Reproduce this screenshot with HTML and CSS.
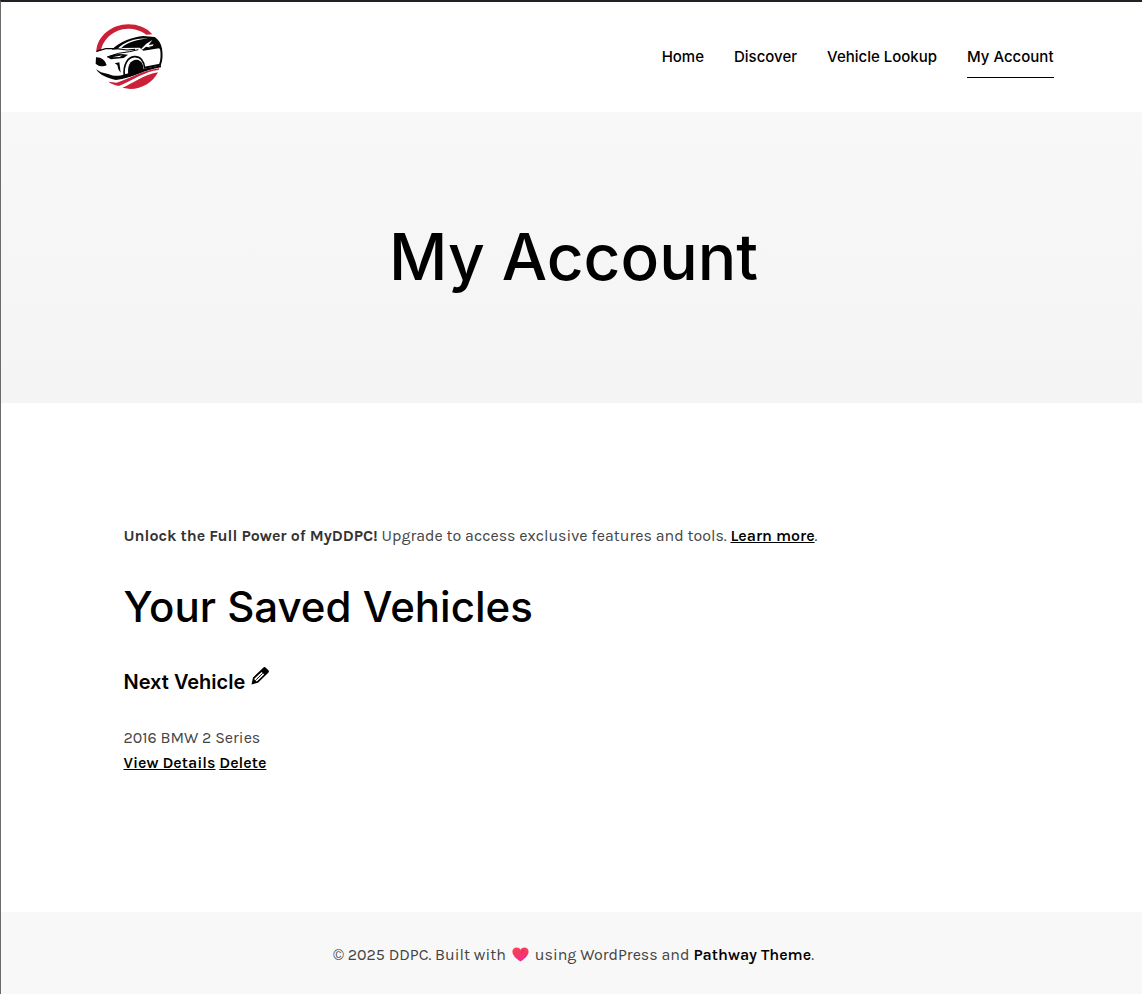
FILE: index.html
```html
<!DOCTYPE html>
<html lang="en">
<head>
<meta charset="utf-8">
<title>My Account</title>
<link rel="stylesheet" href="styles.css">
</head>
<body>
<header class="header">
  <a class="logo"><svg viewBox="30 24 207 201" width="69" height="67">
    <path d="M34 110C36 62 82 28 130 28C158 28 185 38 202 58L184 59C168 46 148 41 128 41C90 42 55 69 48 106Z" fill="#cc1f38"/>
    <path d="M80 104C102 82 142 65 175 63L209 66C221 74 229 87 231 101L228 106L222 100L175 107L164 98L109 99C128 80 160 74 190 70C150 69 120 79 96 103Z" fill="#050505"/>
    <path d="M166 104L184 86L202 75L191 90L206 88L203 93L192 95L196 98Z" fill="#fff"/>
    <path d="M174 103L183 95L199 98L194 103Z" fill="#050505"/>
    <path d="M34 109L62 101L95 101L126 105L150 103" fill="none" stroke="#050505" stroke-width="3.5"/>
    <path d="M66 126L100 115L134 110L160 104" fill="none" stroke="#050505" stroke-width="3"/>
    <path d="M33 127C47 126 60 134 65 151C54 157 39 153 32 146Z" fill="#050505"/>
    <path d="M67 126C84 116 104 115 129 119L116 129L77 133Z" fill="#050505"/>
    <path d="M82 127L112 121L104 126Z" fill="#fff"/>
    <path d="M89 145L103 142L107 173L100 163L97 150Z" fill="#050505"/>
    <path d="M118 182C114 149 128 127 148 125C166 124 177 138 179 160" fill="none" stroke="#050505" stroke-width="5"/>
    <path d="M131 186C124 153 136 134 155 134C170 135 178 151 174 170Z" fill="#050505"/>
    <path d="M178 158L225 149C230 136 231 119 228 100" fill="none" stroke="#050505" stroke-width="6"/>
    <path d="M33 163L48 172L72 178C87 184 100 184 120 178L176 161L228 151V157C178 164 143 190 93 195C67 190 44 180 33 163Z" fill="#050505"/>
    <path d="M70 200L95 203C133 192 174 165 223 160L221 165C178 169 145 196 101 213C88 210 78 206 70 200Z" fill="#cc1f38"/>
    <path d="M112 218C145 206 171 180 219 172C203 203 171 222 136 222Z" fill="#cc1f38"/>
  </svg></a>
  <nav class="nav">
    <a class="nav-link">Home</a>
    <a class="nav-link">Discover</a>
    <a class="nav-link">Vehicle Lookup</a>
    <a class="nav-link active">My Account</a>
  </nav>
</header>
<section class="hero"><h1 class="hero-title">My Account</h1></section>
<main class="content">
  <p class="notice"><strong class="notice-lead">Unlock the Full Power of MyDDPC!</strong> Upgrade to access exclusive features and tools. <a class="link">Learn more</a>.</p>
  <h2 class="section-title">Your Saved Vehicles</h2>
  <h3 class="vehicle-name"><span>Next Vehicle</span>
    <svg class="pencil" viewBox="0 0 18 18" width="18" height="18">
      <path d="M0.5 17.5L2 10.5L12.2.8C13-.1 14-.1 14.8.7L17.4 3.3C18.1 4.1 18.1 4.9 17.3 5.7L7 15.8Z"/>
      <path class="pencil-cut" d="M3.5 11.6L10.6 4.9L13.1 7.4L6.1 14.2L4.9 14.2L4.7 12.9L3.4 12.7Z"/>
      <path class="pencil-line" d="M5.2 12.7L11.7 6.3"/>
    </svg>
  </h3>
  <div class="vehicle-model">2016 BMW 2 Series</div>
  <div class="actions"><a class="link">View Details</a> <a class="link">Delete</a></div>
</main>
<footer class="footer">
  <span class="copy">© 2025 DDPC. Built with</span>
  <svg class="heart" viewBox="0 0 17 15" width="17" height="15">
    <defs><linearGradient id="heart-fill" x1="0" y1="0" x2=".35" y2="1"><stop offset="0" stop-color="#f8455c"/><stop offset=".5" stop-color="#f43a5e"/><stop offset="1" stop-color="#fb2796"/></linearGradient></defs>
    <path d="M8.5 14.6C6 13 .4 9 .4 4.8C.4 2.2 2.1.5 4.5.5C6.3.5 7.7 1.4 8.5 2.7C9.3 1.4 10.7.5 12.5.5C14.9.5 16.6 2.2 16.6 4.8C16.6 9 11 13 8.5 14.6Z" fill="url(#heart-fill)"/>
    <path d="M11 2.2C12.2 2.9 11 5 9 6.5" fill="none" stroke="#c9304d" stroke-width=".9"/>
  </svg>
  <span class="using">using WordPress and</span>
  <span><a class="theme">Pathway Theme</a>.</span>
</footer>
</body>
</html>
```
FILE: styles.css
```css
* { box-sizing: border-box; }
body {
  margin: 0; height: 994px; display: flex; flex-direction: column;
  border-top: 2px solid #202126; border-left: 1px solid #6b6b6b;
  background: #fff; color: #444;
  font: 400 16px/25px Karla, Roboto, sans-serif;
}
h1, h2, h3, p { margin: 0; }
.header {
  height: 110px; flex: none; display: flex; justify-content: space-between; align-items: flex-start;
  padding: 21px 88.5px 0 94px;
}
.logo svg { display: block; }
.nav { display: flex; gap: 30px; padding-top: 14px; }
.nav-link {
  font: 500 15px/40px Inter, sans-serif; color: #000;
  border-bottom: 1px solid transparent; white-space: nowrap;
}
.active { border-color: #000; }
.hero {
  height: 291px; flex: none; display: flex; justify-content: center; align-items: center;
  background: linear-gradient(#f8f8f8, #f4f4f4); padding: 0 0 2px 4px;
}
.hero-title { font: 500 64px/80px Inter, sans-serif; color: #000; }
.content { height: 509px; flex: none; padding: 120px 123px 0 122.5px; }
.notice { white-space: nowrap; }
.notice-lead { font-weight: 700; color: #333; }
.link, .theme { color: #000; font-weight: 600; }
.link { text-decoration: underline; text-underline-offset: 1px; text-decoration-thickness: 1px; }
.section-title { font: 500 42px/54px Inter, sans-serif; color: #000; margin-top: 32px; }
.vehicle-name {
  display: flex; gap: 6px; font: 600 20px/28px Inter, sans-serif; color: #000;
  margin-top: 34px;
}
.pencil { margin-top: -1px; }
.pencil-cut { fill: #fff; }
.pencil-line { stroke: #000; stroke-width: 1; }
.vehicle-model { margin-top: 29px; }
.footer {
  flex: 1; display: flex; justify-content: center; align-items: flex-start;
  background: #f8f8f8; padding: 30px 0 0 4px; white-space: nowrap;
}
.heart { margin: 5px 6px 0; }
.using { margin-right: 4px; }
```
